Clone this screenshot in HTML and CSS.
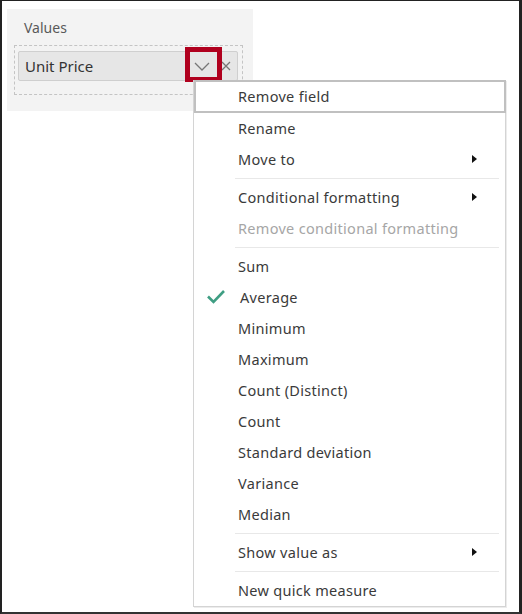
FILE: index.html
```html
<!DOCTYPE html>
<html>
<head>
<meta charset="utf-8">
<link rel="stylesheet" href="styles.css">
</head>
<body>
<div class="frame">
  <div class="panel">
    <div class="panel-title">Values</div>
    <div class="dropzone">
      <div class="pill">
        <span class="pill-label">Unit Price</span>
        <span class="chevron-wrap">
          <svg class="chevron" width="16" height="9" viewBox="0 0 16 9"><path d="M1 1 L8 8 L15 1" fill="none" stroke="#777" stroke-width="1.3"/></svg>
        </span>
        <svg class="close" width="10" height="10" viewBox="0 0 10 10"><path d="M1 1 L9 9 M9 1 L1 9" fill="none" stroke="#777" stroke-width="1.3"/></svg>
      </div>
    </div>
  </div>

  <div class="menu">
    <div class="item focused"><span class="icon"></span><span class="label">Remove field</span></div>
    <div class="item"><span class="icon"></span><span class="label">Rename</span></div>
    <div class="item"><span class="icon"></span><span class="label">Move to</span><span class="arrow"></span></div>
    <div class="sep"></div>
    <div class="item"><span class="icon"></span><span class="label">Conditional formatting</span><span class="arrow"></span></div>
    <div class="item disabled"><span class="icon"></span><span class="label">Remove conditional formatting</span></div>
    <div class="sep"></div>
    <div class="item"><span class="icon"></span><span class="label">Sum</span></div>
    <div class="item checked"><span class="icon"><svg width="20" height="15" viewBox="0 0 20 15"><path d="M2 7.5 L7.5 13 L18 2" fill="none" stroke="#3f9e83" stroke-width="2.6"/></svg></span><span class="label">Average</span></div>
    <div class="item"><span class="icon"></span><span class="label">Minimum</span></div>
    <div class="item"><span class="icon"></span><span class="label">Maximum</span></div>
    <div class="item"><span class="icon"></span><span class="label">Count (Distinct)</span></div>
    <div class="item"><span class="icon"></span><span class="label">Count</span></div>
    <div class="item"><span class="icon"></span><span class="label">Standard deviation</span></div>
    <div class="item"><span class="icon"></span><span class="label">Variance</span></div>
    <div class="item"><span class="icon"></span><span class="label">Median</span></div>
    <div class="sep"></div>
    <div class="item"><span class="icon"></span><span class="label">Show value as</span><span class="arrow"></span></div>
    <div class="sep"></div>
    <div class="item"><span class="icon"></span><span class="label">New quick measure</span></div>
  </div>
</div>
</body>
</html>
```

FILE: styles.css
```css
html, body {
  margin: 0;
  padding: 0;
  background: #fff;
}
.frame {
  position: relative;
  width: 522px;
  height: 614px;
  box-sizing: border-box;
  border-top: 1px solid #222;
  border-left: 2px solid #222;
  border-right: 3px solid #222;
  border-bottom: 2px solid #333;
  padding: 8px 0 0 5px;
  font-family: "Noto Sans", "Open Sans", sans-serif;
}
.panel {
  width: 246px;
  height: 102px;
  background: #f3f3f3;
  box-sizing: border-box;
  padding: 9px 10px 0 7px;
}
.panel-title {
  font-size: 14px;
  color: #595959;
  padding-left: 10px;
  line-height: 20px;
}
.dropzone {
  margin-top: 7px;
  width: 229px;
  height: 50px;
  box-sizing: border-box;
  border: 1px dashed #c4c4c4;
  padding: 5px 4px 0 3px;
}
.pill {
  height: 30px;
  box-sizing: border-box;
  background: #e6e6e6;
  border: 1px solid #cfcfcf;
  border-radius: 2px;
  display: flex;
  align-items: center;
  padding-left: 6px;
  position: relative;
}
.pill-label {
  flex: 1;
  font-size: 15px;
  color: #333;
}
.chevron-wrap {
  position: relative;
  width: 30px;
  height: 28px;
  display: flex;
  align-items: center;
  justify-content: center;
  margin-right: 4px;
}
.chevron-wrap::after {
  content: "";
  position: absolute;
  left: -2px;
  top: -5px;
  width: 37px;
  height: 35px;
  box-sizing: border-box;
  border: 5px solid #b0001e;
}
.close {
  margin-right: 6px;
}
.menu {
  position: absolute;
  left: 191px;
  top: 79px;
  width: 313px;
  box-sizing: border-box;
  background: #fff;
  border: 1px solid #d4d4d4;
  box-shadow: 1px 1px 0 #ececec;
}
.item {
  height: 31px;
  display: flex;
  align-items: center;
  box-sizing: border-box;
  padding-bottom: 2px;
  font-size: 14.5px;
  letter-spacing: 0.3px;
  color: #3a3a3a;
}
.item.focused {
  box-shadow: inset 0 0 0 2px #c0c0c0;
  margin: -1px -1px 0 0;
  height: 33px;
  padding-bottom: 1px;
}
.item.disabled {
  color: #a6a6a6;
}
.icon {
  width: 44px;
  flex: none;
  display: flex;
  align-items: center;
  justify-content: flex-end;
  padding-right: 12px;
  box-sizing: border-box;
}
.checked .label {
  padding-left: 2px;
}
.label {
  flex: 1;
  white-space: nowrap;
}
.arrow {
  width: 0;
  height: 0;
  border-top: 4.5px solid transparent;
  border-bottom: 4.5px solid transparent;
  border-left: 5px solid #111;
  margin-right: 28px;
}
.sep {
  height: 1px;
  background: #e8e8e8;
  margin: 3px 6px 3px 41px;
}
```
